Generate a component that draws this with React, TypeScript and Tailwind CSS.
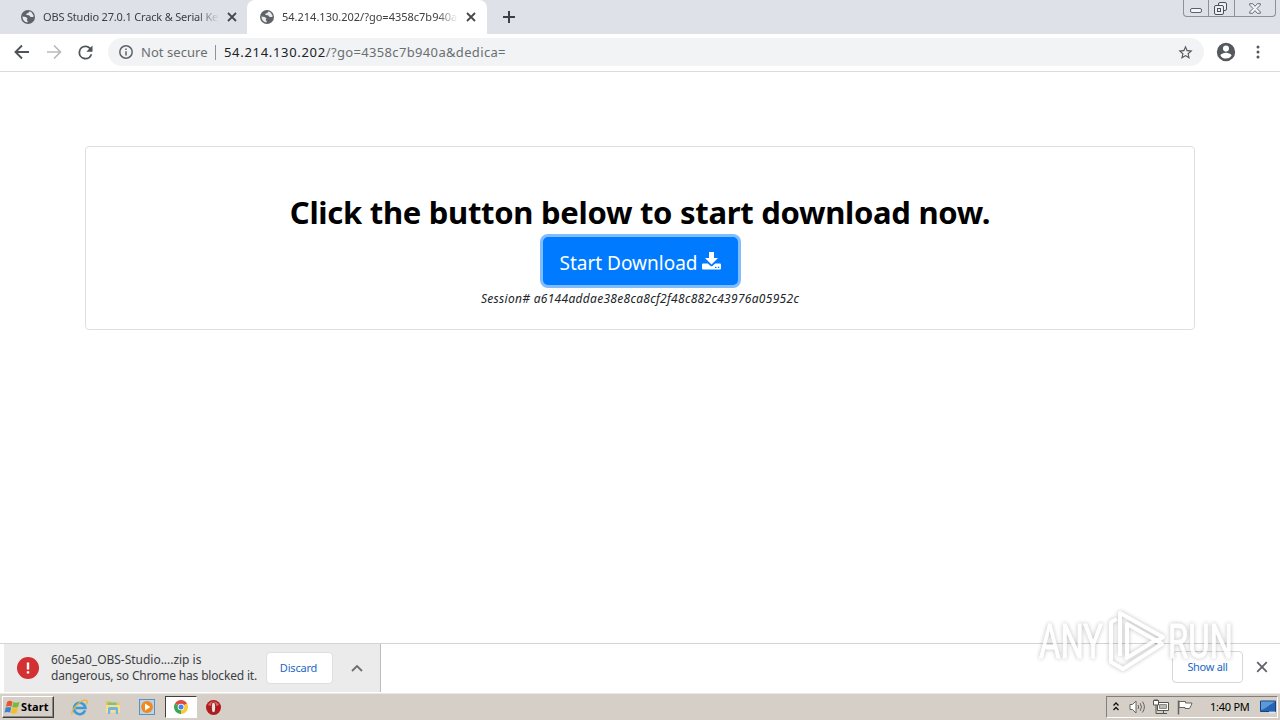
import type { ReactNode } from 'react';
import clsx from 'clsx';

const UI_FONT = "font-['Noto_Sans','Open_Sans',sans-serif]";

function GlobeIcon() {
  return (
    <svg width="14" height="14" viewBox="0 0 14 14" className="shrink-0">
      <circle cx="7" cy="7" r="7" fill="#5f6368" />
      <path d="M8.2 1.5 7.4 3l-1.8.6-.3 1.5 2.7.2 1.7 1.6 2.7.2V5.2L10.2 2z" fill="#e8eaed" />
      <path d="M1.4 6.6 4.8 7l1.7 1.6-.8 1.1.9 1.2v1.6L4 11.8 2 9.6z" fill="#e8eaed" />
    </svg>
  );
}

function CloseIcon({ size = 10, color = '#45494d', width = 1.8 }: { size?: number; color?: string; width?: number }) {
  return (
    <svg width={size} height={size} viewBox="0 0 10 10" className="shrink-0">
      <path d="M1 1l8 8M9 1L1 9" stroke={color} strokeWidth={width} />
    </svg>
  );
}

interface TabProps {
  title: string;
  active?: boolean;
  titleClass: string;
}

function Tab({ title, active, titleClass }: TabProps) {
  return (
    <div
      className={clsx(
        'flex h-[34px] w-[240px] items-center',
        active ? 'rounded-t-lg bg-white pl-[13px] pr-[11px]' : 'pl-[14px] pr-[10px]',
      )}
    >
      <GlobeIcon />
      <span
        className={clsx(
          'ml-2 w-[176px] overflow-hidden whitespace-nowrap text-[11px] leading-[16px] text-[#3c4043] [mask-image:linear-gradient(to_right,black_88%,transparent)]',
          titleClass,
        )}
      >
        {title}
      </span>
      <span className="ml-auto flex">
        <CloseIcon />
      </span>
    </div>
  );
}

function WindowControls() {
  return (
    <div className="ml-auto mr-[4px] flex h-[17px] w-[93px] self-start rounded-b-[4px] border border-t-0 border-[#8d919a]">
      <div className="flex w-[25px] items-end justify-center border-r border-[#8d919a] pb-[3px]">
        <div className="h-[5px] w-[12px] rounded-[2px] border border-[#5b606a] bg-[#f4f5f7]" />
      </div>
      <div className="flex w-[26px] items-center justify-center border-r border-[#8d919a] pr-[2px]">
        <svg width="13" height="13" viewBox="0 0 13 13" fill="#eef0f3" stroke="#4a4f59">
          <rect x="4.5" y=".5" width="8" height="8" rx="1.5" />
          <rect x=".5" y="3.5" width="9" height="9" rx="1.5" />
          <rect x="3.5" y="6.5" width="3" height="3" />
        </svg>
      </div>
      <div className="flex flex-1 items-center justify-center pr-[1px]">
        <svg width="12" height="11" viewBox="0 0 12 11">
          <path
            d="M.7.7h3L6 3.3 8.3.7h3v1.4L8 5.5l3.3 3.4v1.4h-3L6 7.7l-2.3 2.6h-3V8.9L4 5.5.7 2.1z"
            fill="#f2f3f5"
            stroke="#5b606a"
            strokeWidth=".9"
          />
        </svg>
      </div>
    </div>
  );
}

function TabStrip() {
  return (
    <div className="flex h-[34px] bg-[#dee1e8] pl-[7px]">
      <Tab title="OBS Studio 27.0.1 Crack & Serial Key" titleClass="tracking-[-0.18px]" />
      <Tab active title="54.214.130.202/?go=4358c7b940a&dedica=" titleClass="tracking-[0px]" />
      <div className="flex w-[44px] items-center justify-center">
        <svg width="12" height="12" viewBox="0 0 12 12" stroke="#3c4043" strokeWidth="2">
          <path d="M6 0v12M0 6h12" />
        </svg>
      </div>
      <WindowControls />
    </div>
  );
}

function Toolbar() {
  return (
    <div className="flex h-[38px] items-center border-b border-[#d9dbde] bg-white pb-[1px]">
      <div className="flex h-full w-[108px] items-center pl-[10px]">
        <svg width="24" height="24" viewBox="0 0 24 24" fill="none" stroke="#4f5357" strokeWidth="1.9">
          <path d="M19 12H6M12 5.500 5.500 12l6.500 6.500" />
        </svg>
        <svg width="24" height="24" viewBox="0 0 24 24" fill="none" stroke="#b8babd" strokeWidth="1.7" className="ml-2">
          <path d="M5 12h13M12 5.500 18.500 12 12 18.500" />
        </svg>
        <svg width="21" height="21" viewBox="0 0 24 24" fill="#4f5357" className="ml-[9px]">
          <path d="M17.650 6.350A7.960 7.960 0 0 0 12 4a8 8 0 1 0 7.730 10h-2.080A6 6 0 1 1 12 6c1.660 0 3.140.690 4.220 1.780L13 11h7V4z" />
        </svg>
      </div>
      <div className="flex h-[28px] w-[1096px] items-center rounded-full bg-[#f1f3f4] pl-[11px] pr-[10px] text-[13px] leading-[18px]">
        <svg width="14" height="14" viewBox="0 0 14 14" fill="none" stroke="#5f6368" strokeWidth="1.5">
          <circle cx="7" cy="7" r="6.2" />
          <path d="M7 6.2v4.3M7 3.4v1.5" />
        </svg>
        <span className="ml-2 w-[67px] whitespace-nowrap tracking-[0.05px] text-[#6b6f73]">Not secure</span>
        <span className="ml-[7px] h-[15px] w-px bg-[#8f9296]" />
        <span className="ml-2 whitespace-nowrap tracking-[0.34px] text-[#6b6f73]">
          <span className="tracking-[0.68px] text-[#202124]">54.214.130.202</span>/?go=4358c7b940a&amp;dedica=
        </span>
        <svg width="17" height="17" viewBox="0 0 24 24" fill="#55595d" className="ml-auto">
          <path d="m22 9.240-7.190-.62L12 2 9.190 8.630 2 9.240l5.460 4.730L5.820 21 12 17.270 18.180 21l-1.630-7.030zM12 15.400l-3.760 2.270 1-4.280-3.320-2.880 4.380-.38L12 6.100l1.710 4.040 4.380.38-3.320 2.880 1 4.280z" />
        </svg>
      </div>
      <svg width="22" height="22" viewBox="0 0 24 24" fill="#55595d" className="ml-[11px]">
        <path d="M12 2a10 10 0 1 0 0 20 10 10 0 0 0 0-20zm0 3a3.300 3.300 0 1 1 0 6.600A3.300 3.300 0 0 1 12 5zm0 14.200a7.200 7.200 0 0 1-6-3.220c.03-1.990 4-3.080 6-3.080s5.970 1.090 6 3.080a7.200 7.200 0 0 1-6 3.220z" />
      </svg>
      <svg width="4" height="14" viewBox="0 0 4 14" fill="#55595d" className="ml-[19px]">
        <circle cx="2" cy="2" r="1.5" />
        <circle cx="2" cy="7" r="1.5" />
        <circle cx="2" cy="12" r="1.5" />
      </svg>
    </div>
  );
}

function DownloadPage() {
  return (
    <main className="h-[571px] bg-white px-[85px] pt-[74px]">
      <div className="flex h-[184px] flex-col items-center rounded-[4px] border border-[#dfdfdf] pt-[46px]">
        <h1 className="whitespace-nowrap font-['Noto_Sans',sans-serif] text-[31px] font-bold leading-[38px] tracking-[-0.29px] text-black">
          Click the button below to start download now.
        </h1>
        <button className="mt-[6px] flex h-[48px] w-[195px] shrink-0 items-center justify-center rounded-[5px] bg-[#007bff] pt-[3px] text-[19px] leading-[30px] text-white ring-[3px] ring-[#80bdff]">
          <span className="whitespace-nowrap">Start Download</span>
          <svg width="19" height="18" viewBox="0 0 19 18" fill="#fff" className="mb-[3px] ml-[4px] shrink-0">
            <path d="M7 0h5v6h4L9.500 12.500 3 6h4z" />
            <path d="M1.200 11.500h4.600l2.500 2.300q1.200 1 2.400 0l2.500-2.300h4.600q1.200 0 1.200 1.200v3.600q0 1.200-1.200 1.200H1.200Q0 17.500 0 16.300v-3.600q0-1.200 1.200-1.200z" />
            <path d="M13 14.800h1.400v1.300H13zM15.800 14.800h1.400v1.300h-1.400z" fill="#007bff" />
          </svg>
        </button>
        <p className="mt-[5px] whitespace-nowrap text-[12px] italic leading-[18px] tracking-[0.3px] text-[#212529]">
          Session# a6144addae38e8ca8cf2f48c882c43976a05952c
        </p>
      </div>
    </main>
  );
}

function DownloadShelf() {
  return (
    <div className="flex h-[50px] border-t border-[#d3d3d3] bg-white pl-[4px] text-[12px]">
      <div className="flex h-[48px] w-[377px] items-center border-r border-[#bcbcbc] bg-[#ebebeb] pl-[13px]">
        <svg width="22" height="22" viewBox="0 0 22 22">
          <circle cx="11" cy="11" r="11" fill="#d23032" />
          <path d="M9.8 5.5h2.4v7H9.800zM9.800 14.300h2.400v2.300H9.800z" fill="#fff" />
        </svg>
        <div className="ml-3 w-[206px] whitespace-nowrap leading-[16px] text-[#3c4043]">
          <div className="tracking-[-0.02px]">60e5a0_OBS-Studio....zip is</div>
          <div className="tracking-[-0.17px]">dangerous, so Chrome has blocked it.</div>
        </div>
        <button className="ml-[9px] h-[32px] w-[67px] rounded-[4px] border border-[#dedede] bg-white pr-[2px] text-[11px] tracking-[-0.2px] text-[#2468c8]">
          Discard
        </button>
        <svg width="12" height="8" viewBox="0 0 12 8" fill="none" stroke="#6b6e72" strokeWidth="1.8" className="ml-[18px]">
          <path d="M1 7l5-5 5 5" />
        </svg>
      </div>
      <button className="ml-auto mt-[7px] h-[32px] w-[71px] rounded-[4px] border border-[#d5d7da] bg-white text-[11px] tracking-[-0.3px] text-[#2468c8]">
        Show all
      </button>
      <span className="ml-[13px] mr-[12px] mt-[17px] flex">
        <CloseIcon size={12} color="#5f6368" width={1.5} />
      </span>
    </div>
  );
}

function StartFlag() {
  return (
    <svg width="17" height="15" viewBox="0 0 16 14" className="shrink-0">
      <path d="M3 1.500Q5.500 0 8 1.500L7 6.200Q4.500 5 1.800 6.200z" fill="#e7562a" />
      <path d="M8.800 1.800Q11.500 3.200 14.500 1.500L13.400 6.300Q10.500 7.800 7.800 6.500z" fill="#7ab83a" />
      <path d="M1.600 7Q4.300 5.900 6.800 7.100L5.800 11.800Q3.300 10.500.5 11.800z" fill="#3b83d0" />
      <path d="M7.600 7.300Q10.400 8.600 13.200 7.200L12 12Q9.400 13.500 6.600 12.100z" fill="#f5be25" />
    </svg>
  );
}

function ExplorerIcon() {
  return (
    <svg width="17" height="17" viewBox="0 0 17 17" fill="none">
      <path d="M14.100 11.400A5.700 5.700 0 1 1 14.400 9H4.800" stroke="#3a9bdc" strokeWidth="2.6" />
      <path d="M1.200 15.500C-.8 11.500 10.500-.5 15.600 1.500c1.200.8.6 2.600-.4 4" stroke="#ecb52f" strokeWidth="1.2" />
    </svg>
  );
}

function FolderIcon() {
  return (
    <svg width="16" height="16" viewBox="0 0 16 16">
      <path d="M1 2h5l1 1.500h7.500V13H1z" fill="#e9c65c" />
      <path d="M2.500 3.500h9v4h-9z" fill="#7cc08a" />
      <path d="M1 6h14v7.500H1z" fill="#f6e08d" />
      <path d="M3 9.500q0-1.500 1.500-1.500h7q1.500 0 1.500 1.500V15h-2.200v-4H5.200v4H3z" fill="#6fb4e2" />
    </svg>
  );
}

function MediaIcon() {
  return (
    <svg width="16" height="16" viewBox="0 0 16 16">
      <rect x=".5" y=".5" width="15" height="15" fill="#b8d3ec" stroke="#5c8fc4" />
      <circle cx="8" cy="8" r="5.9" fill="#f08a1c" />
      <path d="M6 4.400 11.300 8 6 11.600z" fill="#fff" />
    </svg>
  );
}

function ChromeIcon() {
  return (
    <svg width="14" height="14" viewBox="0 0 14 14">
      <path d="M7 7 .94 3.500A7 7 0 0 1 13.060 3.500z" fill="#dd4b3e" />
      <path d="M7 7 13.060 3.500A7 7 0 0 1 7 14z" fill="#f9cb38" />
      <path d="M7 7v7A7 7 0 0 1 .94 3.500z" fill="#3fa552" />
      <circle cx="7" cy="7" r="3.3" fill="#fff" />
      <circle cx="7" cy="7" r="2.5" fill="#4285e8" />
    </svg>
  );
}

function OperaIcon() {
  return (
    <svg width="15" height="15" viewBox="0 0 15 15">
      <circle cx="7.5" cy="7.5" r="7.5" fill="#b3191d" />
      <path d="M2 5a6 6 0 0 1 11 0q-5.500 2.500-11 0z" fill="#dc6464" />
      <ellipse cx="7.5" cy="7.5" rx="2.2" ry="5.2" fill="#efe0dc" stroke="#7b1013" strokeWidth=".9" />
    </svg>
  );
}

function QuickItem({ active, children }: { active?: boolean; children: ReactNode }) {
  return (
    <div
      className={clsx(
        'flex h-[22px] items-center justify-center',
        active
          ? 'w-[32px] border border-b-white border-l-[#404040] border-r-white border-t-[#404040] bg-white'
          : 'w-[34px] pr-[2px]',
      )}
    >
      {children}
    </div>
  );
}

function Tray() {
  return (
    <div className="ml-auto mr-[2px] flex h-[22px] w-[172px] items-center border border-b-white border-l-[#808080] border-r-white border-t-[#808080] pl-[6px]">
      <svg width="6" height="9" viewBox="0 0 6 9" fill="none" stroke="#111" strokeWidth="1.3" className="mb-[2px]">
        <path d="M.5 3.500 3 1l2.500 2.500M.5 8 3 5.500 5.500 8" />
      </svg>
      <svg width="17" height="14" viewBox="0 0 17 14" fill="none" stroke="#65655f" className="ml-[10px]">
        <path d="M1 4.500h2.500L7 1v12L3.500 9.500H1z" fill="#fff" />
        <path d="M9 5q1.300 2 0 4M11.200 3.200q2.500 3.800 0 7.600M13.400 1.500q4 5.500 0 11" />
      </svg>
      <svg width="16" height="16" viewBox="0 0 16 16" fill="#fff" stroke="#55554f" className="ml-[7px]">
        <path d="M4.500 3.500h11v8h-11z" />
        <path d="M6.500 5.500h7v4h-7z" fill="#b9b9b4" stroke="#8a8a84" />
        <path d="M7 14.500h7M10.500 11.500v3M3 6v8.500h4" fill="none" />
        <path d="M.5 1.500h5v4.500h-5zM2 0v2M4 0v2" />
      </svg>
      <svg width="16" height="15" viewBox="0 0 16 15" fill="#fff" stroke="#65655f" className="ml-[8px]">
        <path d="M2 1.500h6.500v1.500h6.500q-.5 2-2.500 5.500h-4.500v-1h-6z" />
        <path d="M1.500.5v14" strokeWidth="1.5" />
      </svg>
      <span className="ml-[17px] w-[41px] whitespace-nowrap text-[11px] leading-[14px] tracking-[-0.25px] text-black">1:40 PM</span>
      <svg width="16" height="14" viewBox="0 0 16 14" className="ml-[9px]">
        <path d="M.5 1h15v10.500H.5z" fill="#2463b5" stroke="#16427f" />
        <path d="M1 1.500h14L4 9 1 10z" fill="#5b9ada" />
        <path d="M9 11.500h6v2H9z" fill="#dae5ee" />
      </svg>
    </div>
  );
}

function Taskbar() {
  return (
    <div className="flex h-[27px] items-center border-t border-[#ece9e3] bg-[#d5cfc7] pl-[2px]">
      <button className="flex h-[22px] w-[52px] items-center border border-b-[#404040] border-l-white border-r-[#404040] border-t-white pl-[1px] shadow-[inset_-1px_-1px_0_#8a8680]">
        <StartFlag />
        <span className="text-[11px] font-bold leading-[14px] tracking-[0.1px] text-black">Start</span>
      </button>
      <div className="ml-[9px] flex">
        <QuickItem><ExplorerIcon /></QuickItem>
        <QuickItem><FolderIcon /></QuickItem>
        <QuickItem><MediaIcon /></QuickItem>
        <QuickItem active><ChromeIcon /></QuickItem>
        <QuickItem><OperaIcon /></QuickItem>
      </div>
      <Tray />
    </div>
  );
}

function Watermark() {
  return (
    <svg
      width="200"
      height="70"
      viewBox="0 0 200 70"
      className="pointer-events-none absolute left-[1036px] top-[606px] font-['Roboto',sans-serif] opacity-80 [filter:drop-shadow(0_0_2px_rgba(0,0,0,0.32))]"
    >
      <g fill="#fff" stroke="#fff" strokeWidth="1" fontSize="49">
        <text x="3" y="52" textLength="64" lengthAdjust="spacingAndGlyphs">ANY</text>
        <text x="132" y="52" textLength="65" lengthAdjust="spacingAndGlyphs">RUN</text>
      </g>
      <g fill="none" stroke="#fff" strokeWidth="4" strokeLinejoin="round">
        <path d="M84 50V7l43 24-6 4-30-17v32" />
        <path d="M81 13l-6 3v40l12 7 39-25-6-4-31 19" />
      </g>
    </svg>
  );
}

export default function App() {
  return (
    <div className={clsx('relative h-[720px] w-[1280px] overflow-hidden bg-white', UI_FONT)}>
      <TabStrip />
      <Toolbar />
      <DownloadPage />
      <DownloadShelf />
      <Taskbar />
      <Watermark />
    </div>
  );
}
